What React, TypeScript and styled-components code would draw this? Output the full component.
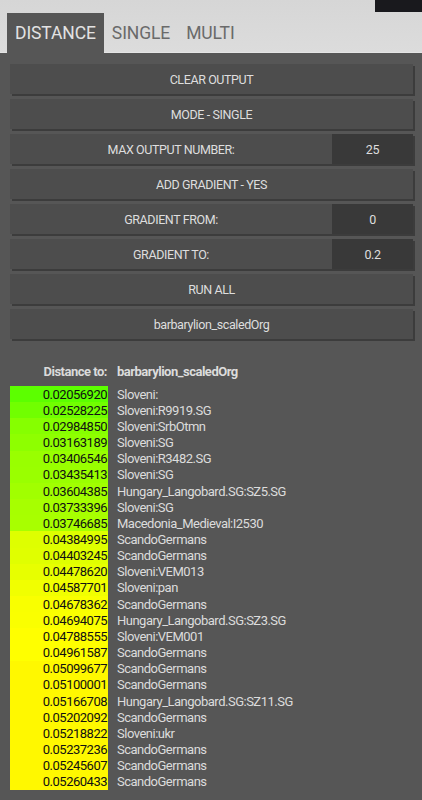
import React from 'react'
import styled, { createGlobalStyle } from 'styled-components'

const Global = createGlobalStyle`
    html, body {
        margin: 0;
        padding: 0;
        background: #565656;
        font-family: Roboto, "Liberation Sans", sans-serif;
    }
`

const Root = styled.div`
    width: 422px;
    min-height: 800px;
    background: #565656;
`

const TopBar = styled.div`
    position: relative;
    height: 53px;
    background: linear-gradient(180deg, #d6d6d6 0%, #dcdcdc 100%);
    border-bottom: 1px solid #e4e4e4;
    box-sizing: border-box;
    display: flex;
    align-items: flex-end;
    padding-left: 7px;
`

const Corner = styled.div`
    position: absolute;
    top: 0;
    right: 0;
    width: 47px;
    height: 12px;
    background: #19191d;
`

const Tab = styled.div<{ $active?: boolean }>`
    height: 40px;
    padding: 0 8px;
    display: flex;
    align-items: center;
    font-size: 17.5px;
    letter-spacing: -0.1px;
    color: ${p => (p.$active ? '#e2e2e2' : '#6a6a6a')};
    background: ${p => (p.$active ? '#565656' : 'transparent')};
    margin-bottom: -1px;
`

const Controls = styled.div`
    display: flex;
    flex-direction: column;
    gap: 5px;
    padding: 11px 9px 0 10px;
`

const Button = styled.div`
    height: 30px;
    display: flex;
    align-items: stretch;
    background: #4d4d4d;
    box-shadow: 2px 2px 0 #3c3c3c;
    color: #dedede;
    font-size: 12.5px;
    letter-spacing: -0.4px;
`

const Label = styled.div`
    flex: 1;
    display: flex;
    align-items: center;
    justify-content: center;
`

const Field = styled.div`
    width: 81px;
    display: flex;
    align-items: center;
    justify-content: center;
    background: #393939;
`

const Results = styled.div`
    padding: 24px 0 0 10px;
    font-size: 13px;
    letter-spacing: -0.5px;
`

const Header = styled.div`
    display: flex;
    height: 16px;
    align-items: center;
    font-weight: bold;
    color: #dadada;
    margin-bottom: 7px;
`

const Row = styled.div`
    display: flex;
    height: 16.16px;
    align-items: center;
`

const Value = styled.div`
    width: 97px;
    padding-right: 1px;
    height: 100%;
    display: flex;
    align-items: center;
    justify-content: flex-end;
    color: #111;
`

const HeadLabel = styled(Value)`
    color: #dadada;
`

const Name = styled.div`
    padding-left: 9px;
    color: #dcdcdc;
    white-space: nowrap;
`

const rows: [string, string][] = [
    ['0.02056920', 'Sloveni:'],
    ['0.02528225', 'Sloveni:R9919.SG'],
    ['0.02984850', 'Sloveni:SrbOtmn'],
    ['0.03163189', 'Sloveni:SG'],
    ['0.03406546', 'Sloveni:R3482.SG'],
    ['0.03435413', 'Sloveni:SG'],
    ['0.03604385', 'Hungary_Langobard.SG:SZ5.SG'],
    ['0.03733396', 'Sloveni:SG'],
    ['0.03746685', 'Macedonia_Medieval:I2530'],
    ['0.04384995', 'ScandoGermans'],
    ['0.04403245', 'ScandoGermans'],
    ['0.04478620', 'Sloveni:VEM013'],
    ['0.04587701', 'Sloveni:pan'],
    ['0.04678362', 'ScandoGermans'],
    ['0.04694075', 'Hungary_Langobard.SG:SZ3.SG'],
    ['0.04788555', 'Sloveni:VEM001'],
    ['0.04961587', 'ScandoGermans'],
    ['0.05099677', 'ScandoGermans'],
    ['0.05100001', 'ScandoGermans'],
    ['0.05166708', 'Hungary_Langobard.SG:SZ11.SG'],
    ['0.05202092', 'ScandoGermans'],
    ['0.05218822', 'Sloveni:ukr'],
    ['0.05237236', 'ScandoGermans'],
    ['0.05245607', 'ScandoGermans'],
    ['0.05260433', 'ScandoGermans'],
]

// red channel anchors picked off the screenshot, green stays high
const stops: [number, number][] = [
    [0.0206, 92],
    [0.0375, 168],
    [0.0438, 222],
    [0.0475, 255],
]

const colorFor = (v: number) => {
    let r = 255
    if (v <= stops[0][0]) r = stops[0][1]
    for (let i = 0; i < stops.length - 1; i++) {
        const [a, ra] = stops[i]
        const [b, rb] = stops[i + 1]
        if (v >= a && v <= b) r = ra + ((v - a) / (b - a)) * (rb - ra)
    }
    const g = v > 0.05 ? 248 : 255
    return `rgb(${Math.round(r)}, ${g}, 0)`
}

export default function App() {
    return (
        <Root>
            <Global />
            <TopBar>
                <Corner />
                <Tab $active>DISTANCE</Tab>
                <Tab>SINGLE</Tab>
                <Tab>MULTI</Tab>
            </TopBar>
            <Controls>
                <Button><Label>CLEAR OUTPUT</Label></Button>
                <Button><Label>MODE - SINGLE</Label></Button>
                <Button><Label>MAX OUTPUT NUMBER:</Label><Field>25</Field></Button>
                <Button><Label>ADD GRADIENT - YES</Label></Button>
                <Button><Label>GRADIENT FROM:</Label><Field>0</Field></Button>
                <Button><Label>GRADIENT TO:</Label><Field>0.2</Field></Button>
                <Button><Label>RUN ALL</Label></Button>
                <Button><Label>barbarylion_scaledOrg</Label></Button>
            </Controls>
            <Results>
                <Header>
                    <HeadLabel>Distance to:</HeadLabel>
                    <Name>barbarylion_scaledOrg</Name>
                </Header>
                {rows.map(([v, n], i) => (
                    <Row key={i}>
                        <Value style={{ background: colorFor(parseFloat(v)) }}>{v}</Value>
                        <Name>{n}</Name>
                    </Row>
                ))}
            </Results>
        </Root>
    )
}
